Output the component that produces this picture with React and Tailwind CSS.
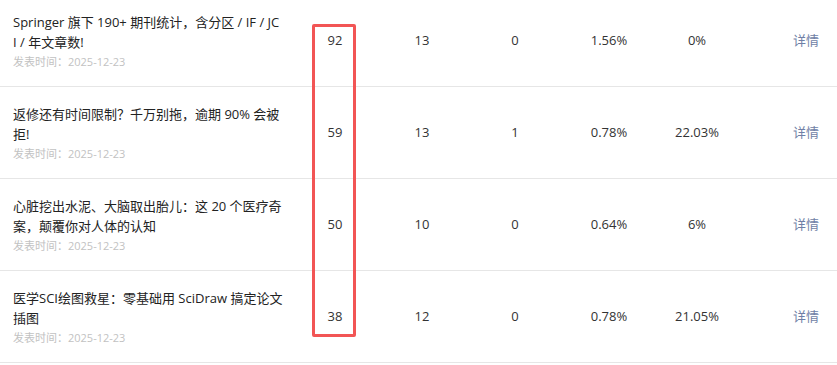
import React from "react";

const rows = [
  { lines: ["Springer 旗下 190+ 期刊统计，含分区 / IF / JC", "I / 年文章数!"], a: "92", b: "13", c: "0", d: "1.56%", e: "0%" },
  { lines: ["返修还有时间限制？千万别拖，逾期 90% 会被", "拒!"], a: "59", b: "13", c: "1", d: "0.78%", e: "22.03%" },
  { lines: ["心脏挖出水泥、大脑取出胎儿：这 20 个医疗奇", "案，颠覆你对人体的认知"], a: "50", b: "10", c: "0", d: "0.64%", e: "6%" },
  { lines: ["医学SCI绘图救星：零基础用 SciDraw 搞定论文", "插图"], a: "38", b: "12", c: "0", d: "0.78%", e: "21.05%" },
];

export default function App() {
  return (
    <div
      className="relative w-[837px] h-[365px] overflow-hidden bg-white text-[#333]"
      style={{ fontFamily: '"Open Sans", "Noto Sans CJK SC", sans-serif' }}
    >
      <div className="-mt-[5px]">
        {rows.map((r, i) => (
          <div
            key={i}
            className="grid grid-cols-[298px_74px_100px_86px_102px_74px_103px] items-center h-[92px] border-b border-[#e6e6e6] text-[13px]"
          >
            <div className="pl-[13px] pr-[4px]">
              {r.lines.map((l, j) => (
                <div key={j} className="text-[13px] leading-[20px] text-[#222] whitespace-nowrap">{l}</div>
              ))}
              <div className="text-[11px] leading-[14px] mt-[3px] text-[#c2c2c2]">发表时间：2025-12-23</div>
            </div>
            <div className="text-center">{r.a}</div>
            <div className="text-center">{r.b}</div>
            <div className="text-center">{r.c}</div>
            <div className="text-center">{r.d}</div>
            <div className="text-center">{r.e}</div>
            <div className="text-right pr-[18px] text-[#6f7fa6]">详情</div>
          </div>
        ))}
      </div>
      <div className="absolute left-[312px] top-[24px] w-[44px] h-[313px] border-[3px] border-[#f25555] rounded-[2px]" />
    </div>
  );
}
